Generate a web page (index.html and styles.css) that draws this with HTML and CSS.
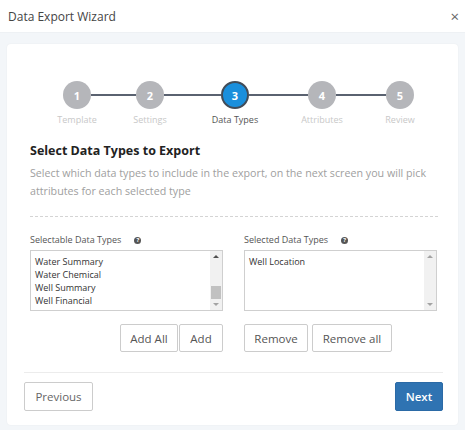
FILE: index.html
```html
<!DOCTYPE html>
<html>
<head>
<meta charset="utf-8">
<link rel="stylesheet" href="styles.css">
</head>
<body>
<div class="modal">
  <div class="modal-header">
    <span class="modal-title">Data Export Wizard</span>
    <span class="close">×</span>
  </div>
  <div class="modal-body">
    <div class="card">
      <div class="card-content">
        <div class="steps">
          <div class="step"><div class="circle">1</div><div class="step-label">Template</div></div>
          <div class="connector c1"></div>
          <div class="step"><div class="circle">2</div><div class="step-label">Settings</div></div>
          <div class="connector c2"></div>
          <div class="step active"><div class="circle">3</div><div class="step-label">Data Types</div></div>
          <div class="connector c3"></div>
          <div class="step"><div class="circle">4</div><div class="step-label">Attributes</div></div>
          <div class="connector c4"></div>
          <div class="step"><div class="circle">5</div><div class="step-label">Review</div></div>
        </div>
        <h2 class="heading">Select Data Types to Export</h2>
        <p class="desc">Select which data types to include in the export, on the next screen you will pick attributes for each selected type</p>
        <div class="divider"></div>
        <div class="pickers">
          <div class="picker">
            <div class="picker-label">Selectable Data Types <span class="help">?</span></div>
            <div class="listbox">
              <div class="items">
                <div class="item">Water Summary</div>
                <div class="item">Water Chemical</div>
                <div class="item">Well Summary</div>
                <div class="item">Well Financial</div>
              </div>
              <div class="scrollbar">
                <div class="arrow up dark"></div>
                <div class="track"><div class="thumb"></div></div>
                <div class="arrow down"></div>
              </div>
            </div>
            <div class="btn-row right">
              <button class="btn">Add All</button>
              <button class="btn tight">Add</button>
            </div>
          </div>
          <div class="picker">
            <div class="picker-label">Selected Data Types <span class="help">?</span></div>
            <div class="listbox">
              <div class="items">
                <div class="item">Well Location</div>
              </div>
              <div class="scrollbar">
                <div class="arrow up"></div>
                <div class="track"></div>
                <div class="arrow down"></div>
              </div>
            </div>
            <div class="btn-row left">
              <button class="btn">Remove</button>
              <button class="btn">Remove all</button>
            </div>
          </div>
        </div>
      </div>
      <div class="footer">
        <button class="btn prev">Previous</button>
        <button class="btn next">Next</button>
      </div>
    </div>
  </div>
</div>
</body>
</html>
```
FILE: styles.css
```css
* { box-sizing: border-box; }
html, body { margin: 0; padding: 0; }
body {
  font-family: "Open Sans", "Noto Sans", sans-serif;
  width: 465px;
  height: 430px;
  overflow: hidden;
  background: #fff;
}
.modal { display: flex; flex-direction: column; height: 430px; }
.modal-header {
  height: 32px;
  display: flex;
  align-items: center;
  justify-content: space-between;
  padding: 0 6px 0 8px;
  background: #fff;
}
.modal-title { font-size: 12px; color: #444; }
.close { font-size: 15px; color: #666; line-height: 1; }
.modal-body {
  flex: 1;
  background: #f3f6f9;
  border-top: 1px solid #eef1f4;
  padding: 11px 7px 5px 7px;
}
.card {
  background: #fff;
  border-radius: 4px;
  box-shadow: 0 0 2px rgba(0,0,0,0.06);
  height: 381px;
  padding: 0 15px 14px 17px;
  display: flex;
  flex-direction: column;
}
.card-content { padding: 37px 5px 0 6px; flex: 1; }
.steps { display: flex; align-items: flex-start; margin-left: 17px; }
.step {
  width: 60px;
  display: flex;
  flex-direction: column;
  align-items: center;
  position: relative;
  z-index: 1;
}
.circle {
  width: 28px; height: 28px;
  border-radius: 50%;
  background: #b5b6ba;
  color: #fff;
  font-size: 11px;
  font-weight: 700;
  display: flex; align-items: center; justify-content: center;
}
.step.active .circle { background: #1a8fdc; border: 2px solid #424c58; }
.step-label { margin-top: 4px; font-size: 9px; line-height: 14px; color: #c8c8c8; white-space: nowrap; }
.step.active .step-label { color: #555; }
.connector { height: 2px; background: #5a6270; margin: 13px -16px 0; }
.c1 { width: 45px; }
.c2 { width: 57px; }
.c3 { width: 59px; }
.c4 { width: 50px; }
.heading { font-size: 12.5px; font-weight: 700; color: #222; line-height: 20px; margin: 14px 0 0; }
.desc { font-size: 10.7px; color: #a0a0a0; line-height: 18px; margin: 3px 0 0; }
.divider { border-top: 1px dashed #d4d4d4; margin-top: 16px; }
.pickers { display: flex; gap: 21px; margin-top: 17px; }
.picker { width: 193px; }
.picker-label { font-size: 9px; line-height: 12px; color: #555; display: flex; align-items: center; }
.help {
  display: inline-flex; align-items: center; justify-content: center;
  width: 7px; height: 7px; border-radius: 50%;
  background: #555; color: #fff; font-size: 6px; font-weight: 700;
  margin-left: 13px;
}
.listbox {
  margin-top: 4px;
  height: 61px;
  border: 1px solid #cfcfcf;
  display: flex;
}
.items { flex: 1; padding: 4px 0 0 4px; }
.item { font-size: 9px; line-height: 13px; color: #333; }
.scrollbar { width: 12px; display: flex; flex-direction: column; background: #f1f1f1; }
.arrow { height: 11px; position: relative; }
.arrow::after {
  content: ""; position: absolute; left: 3px; top: 4px;
  border-left: 3px solid transparent; border-right: 3px solid transparent;
}
.arrow.up::after { border-bottom: 3px solid #a3a3a3; }
.arrow.up.dark::after { border-bottom-color: #505050; }
.arrow.down::after { border-top: 3px solid #a3a3a3; }
.track { flex: 1; display: flex; flex-direction: column; justify-content: flex-end; padding: 0 1px; }
.thumb { height: 13px; background: #c1c1c1; }
.btn-row { display: flex; margin-top: 13px; gap: 4px; }
.btn-row.right { justify-content: flex-end; gap: 1px; }
.btn {
  font-family: "Open Sans", "Noto Sans", sans-serif;
  font-size: 11.5px;
  color: #555;
  background: #fff;
  border: 1px solid #cccccc;
  border-radius: 2px;
  height: 28px;
  padding: 0 11px;
  cursor: pointer;
}
.btn-row.right .btn:first-child { width: 58px; padding: 0; }
.btn-row.right .btn.tight { width: 44px; padding: 0; }
.btn-row.left .btn:first-child { width: 64px; padding: 0; }
.btn-row.left .btn:last-child { width: 80px; padding: 0; }
.footer {
  border-top: 1px solid #ececec;
  padding-top: 9px;
  display: flex;
  justify-content: space-between;
}
.prev { height: 29px; width: 69px; padding: 0; color: #666; font-size: 11.5px; }
.next { height: 29px; width: 48px; padding: 0; background: #2f73b2; border-color: #2b6aa6; color: #fff; font-weight: 600; font-size: 11.5px; }
```
